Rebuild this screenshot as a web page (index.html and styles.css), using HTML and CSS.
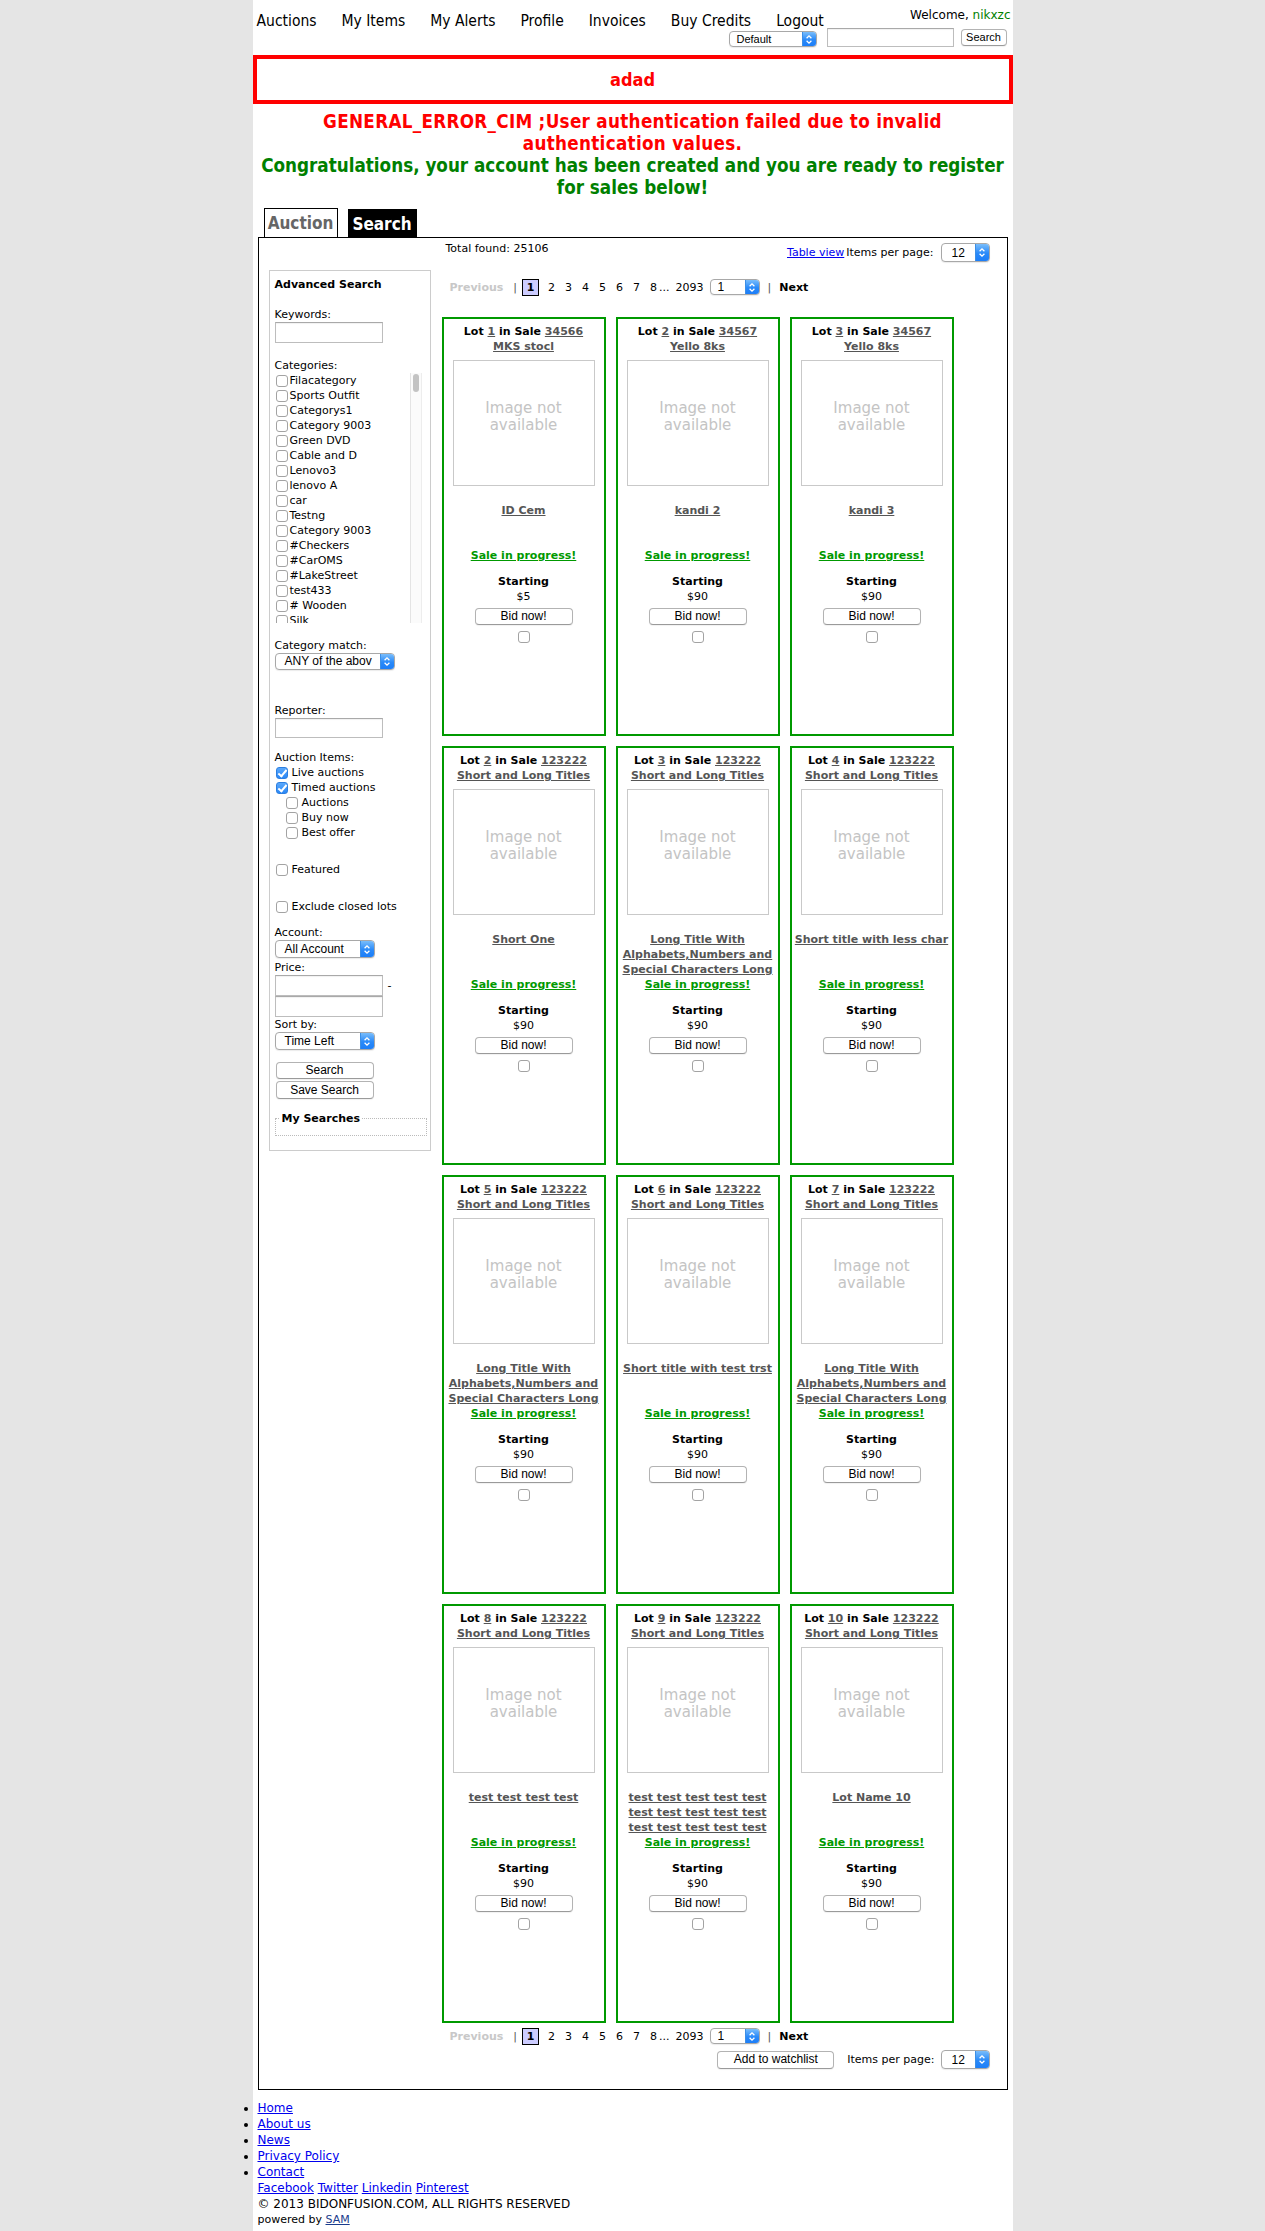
FILE: index.html
```html
<!DOCTYPE html>
<html lang="en">
<head>
<meta charset="utf-8">
<title>Search</title>
<link rel="stylesheet" href="styles.css">
</head>
<body>
<div class="page">
  <header class="header">
    <nav class="nav">
      <a href="#">Auctions</a>
      <a href="#">My Items</a>
      <a href="#">My Alerts</a>
      <a href="#">Profile</a>
      <a href="#">Invoices</a>
      <a href="#">Buy Credits</a>
      <a href="#">Logout</a>
    </nav>
    <div class="user">
      <div class="welcome">Welcome, <span class="name">nikxzc</span></div>
      <form class="quick">
        <span class="sel sel-default"><span class="sel-text">Default</span><span class="sel-arrow"><svg width="8" height="11" viewBox="0 0 8 11"><path d="M1.6 4.2 L4 1.8 L6.4 4.2 M1.6 6.8 L4 9.2 L6.4 6.8" stroke="#fff" stroke-width="1.3" fill="none"/></svg></span></span>
        <input class="txt txt-quick" type="text">
        <button class="btn btn-quick" type="button">Search</button>
      </form>
    </div>
  </header>

  <div class="alert">adad</div>
  <div class="msg msg-error">GENERAL_ERROR_CIM ;User authentication failed due to invalid<br>authentication values.</div>
  <div class="msg msg-ok">Congratulations, your account has been created and you are ready to register<br>for sales below!</div>

  <div class="tabs">
    <a class="tab tab-auction" href="#">Auction</a>
    <a class="tab tab-search" href="#">Search</a>
  </div>

  <div class="mainbox">
    <aside class="sidebar">
      <div class="side-title">Advanced Search</div>
      <div class="lbl lbl-keywords">Keywords:</div>
      <input class="txt txt-side" type="text">
      <div class="lbl lbl-cats">Categories:</div>
      <div class="catbox">
        <div class="catlist">
          <label class="chk"><input class="cb" type="checkbox"><span>Filacategory</span></label>
          <label class="chk"><input class="cb" type="checkbox"><span>Sports Outfit</span></label>
          <label class="chk"><input class="cb" type="checkbox"><span>Categorys1</span></label>
          <label class="chk"><input class="cb" type="checkbox"><span>Category 9003</span></label>
          <label class="chk"><input class="cb" type="checkbox"><span>Green DVD</span></label>
          <label class="chk"><input class="cb" type="checkbox"><span>Cable and D</span></label>
          <label class="chk"><input class="cb" type="checkbox"><span>Lenovo3</span></label>
          <label class="chk"><input class="cb" type="checkbox"><span>lenovo A</span></label>
          <label class="chk"><input class="cb" type="checkbox"><span>car</span></label>
          <label class="chk"><input class="cb" type="checkbox"><span>Testng</span></label>
          <label class="chk"><input class="cb" type="checkbox"><span>Category 9003</span></label>
          <label class="chk"><input class="cb" type="checkbox"><span>#Checkers</span></label>
          <label class="chk"><input class="cb" type="checkbox"><span>#CarOMS</span></label>
          <label class="chk"><input class="cb" type="checkbox"><span>#LakeStreet</span></label>
          <label class="chk"><input class="cb" type="checkbox"><span>test433</span></label>
          <label class="chk"><input class="cb" type="checkbox"><span># Wooden</span></label>
          <label class="chk"><input class="cb" type="checkbox"><span>Silk</span></label>
        </div>
        <div class="vscroll"><div class="vthumb"></div></div>
      </div>
      <div class="lbl lbl-match">Category match:</div>
      <span class="sel sel-match"><span class="sel-text">ANY of the abov</span><span class="sel-arrow"><svg width="8" height="11" viewBox="0 0 8 11"><path d="M1.6 4.2 L4 1.8 L6.4 4.2 M1.6 6.8 L4 9.2 L6.4 6.8" stroke="#fff" stroke-width="1.3" fill="none"/></svg></span></span>
      <div class="lbl lbl-reporter">Reporter:</div>
      <input class="txt txt-side txt-reporter" type="text">
      <div class="lbl lbl-items">Auction Items:</div>
      <label class="chk chk-wide"><input class="cb" type="checkbox" checked><span>Live auctions</span></label>
      <label class="chk chk-wide"><input class="cb" type="checkbox" checked><span>Timed auctions</span></label>
      <label class="chk chk-sub"><input class="cb" type="checkbox"><span>Auctions</span></label>
      <label class="chk chk-sub"><input class="cb" type="checkbox"><span>Buy now</span></label>
      <label class="chk chk-sub"><input class="cb" type="checkbox"><span>Best offer</span></label>
      <label class="chk chk-wide chk-gap"><input class="cb" type="checkbox"><span>Featured</span></label>
      <label class="chk chk-wide chk-gap"><input class="cb" type="checkbox"><span>Exclude closed lots</span></label>
      <div class="lbl lbl-account">Account:</div>
      <span class="sel sel-side"><span class="sel-text">All Account</span><span class="sel-arrow"><svg width="8" height="11" viewBox="0 0 8 11"><path d="M1.6 4.2 L4 1.8 L6.4 4.2 M1.6 6.8 L4 9.2 L6.4 6.8" stroke="#fff" stroke-width="1.3" fill="none"/></svg></span></span>
      <div class="lbl lbl-price">Price:</div>
      <div class="price-row"><input class="txt txt-price" type="text"><span class="dash">-</span></div>
      <input class="txt txt-price" type="text">
      <div class="lbl">Sort by:</div>
      <span class="sel sel-side"><span class="sel-text">Time Left</span><span class="sel-arrow"><svg width="8" height="11" viewBox="0 0 8 11"><path d="M1.6 4.2 L4 1.8 L6.4 4.2 M1.6 6.8 L4 9.2 L6.4 6.8" stroke="#fff" stroke-width="1.3" fill="none"/></svg></span></span>
      <button class="btn btn-side btn-search" type="button">Search</button>
      <button class="btn btn-side btn-save" type="button">Save Search</button>
      <fieldset class="searches"><legend>My Searches</legend></fieldset>
    </aside>

    <section class="content">
      <div class="topbar">
        <div class="total">Total found: 25106</div>
        <div class="view">
          <a class="link" href="#">Table view</a><span class="ipp">Items per page:</span>
          <span class="sel sel-ipp"><span class="sel-text">12</span><span class="sel-arrow"><svg width="8" height="11" viewBox="0 0 8 11"><path d="M1.6 4.2 L4 1.8 L6.4 4.2 M1.6 6.8 L4 9.2 L6.4 6.8" stroke="#fff" stroke-width="1.3" fill="none"/></svg></span></span>
        </div>
      </div>

      <div class="pager">
        <span class="pg-prev">Previous</span>
        <span class="pg-sep">|</span>
        <span class="pg-cur">1</span>
        <a class="pg-num" href="#">2</a>
        <a class="pg-num" href="#">3</a>
        <a class="pg-num" href="#">4</a>
        <a class="pg-num" href="#">5</a>
        <a class="pg-num" href="#">6</a>
        <a class="pg-num" href="#">7</a>
        <a class="pg-num" href="#">8</a>
        <span class="pg-dots">...</span>
        <a class="pg-last" href="#">2093</a>
        <span class="sel sel-page"><span class="sel-text">1</span><span class="sel-arrow"><svg width="8" height="11" viewBox="0 0 8 11"><path d="M1.6 4.2 L4 1.8 L6.4 4.2 M1.6 6.8 L4 9.2 L6.4 6.8" stroke="#fff" stroke-width="1.3" fill="none"/></svg></span></span>
        <span class="pg-sep pg-sep2">|</span>
        <a class="pg-next" href="#">Next</a>
      </div>

      <div class="grid">
        <div class="card">
          <div>Lot <a class="gl" href="#">1</a> in Sale <a class="gl" href="#">34566</a></div>
          <div><a class="gl" href="#">MKS stocl</a></div>
          <div class="thumb">Image not<br>available</div>
          <div class="ttl"><a class="gl" href="#">ID Cem</a></div>
          <div><a class="sale" href="#">Sale in progress!</a></div>
          <div class="starting">Starting</div>
          <div class="price">$5</div>
          <button class="btn bid" type="button">Bid now!</button>
          <div class="card-chk"><input class="cb" type="checkbox"></div>
        </div>
        <div class="card">
          <div>Lot <a class="gl" href="#">2</a> in Sale <a class="gl" href="#">34567</a></div>
          <div><a class="gl" href="#">Yello 8ks</a></div>
          <div class="thumb">Image not<br>available</div>
          <div class="ttl"><a class="gl" href="#">kandi 2</a></div>
          <div><a class="sale" href="#">Sale in progress!</a></div>
          <div class="starting">Starting</div>
          <div class="price">$90</div>
          <button class="btn bid" type="button">Bid now!</button>
          <div class="card-chk"><input class="cb" type="checkbox"></div>
        </div>
        <div class="card">
          <div>Lot <a class="gl" href="#">3</a> in Sale <a class="gl" href="#">34567</a></div>
          <div><a class="gl" href="#">Yello 8ks</a></div>
          <div class="thumb">Image not<br>available</div>
          <div class="ttl"><a class="gl" href="#">kandi 3</a></div>
          <div><a class="sale" href="#">Sale in progress!</a></div>
          <div class="starting">Starting</div>
          <div class="price">$90</div>
          <button class="btn bid" type="button">Bid now!</button>
          <div class="card-chk"><input class="cb" type="checkbox"></div>
        </div>

        <div class="card">
          <div>Lot <a class="gl" href="#">2</a> in Sale <a class="gl" href="#">123222</a></div>
          <div><a class="gl" href="#">Short and Long Titles</a></div>
          <div class="thumb">Image not<br>available</div>
          <div class="ttl"><a class="gl" href="#">Short One</a></div>
          <div><a class="sale" href="#">Sale in progress!</a></div>
          <div class="starting">Starting</div>
          <div class="price">$90</div>
          <button class="btn bid" type="button">Bid now!</button>
          <div class="card-chk"><input class="cb" type="checkbox"></div>
        </div>
        <div class="card">
          <div>Lot <a class="gl" href="#">3</a> in Sale <a class="gl" href="#">123222</a></div>
          <div><a class="gl" href="#">Short and Long Titles</a></div>
          <div class="thumb">Image not<br>available</div>
          <div class="ttl"><a class="gl" href="#">Long Title With<br>Alphabets,Numbers and<br>Special Characters Long</a></div>
          <div><a class="sale" href="#">Sale in progress!</a></div>
          <div class="starting">Starting</div>
          <div class="price">$90</div>
          <button class="btn bid" type="button">Bid now!</button>
          <div class="card-chk"><input class="cb" type="checkbox"></div>
        </div>
        <div class="card">
          <div>Lot <a class="gl" href="#">4</a> in Sale <a class="gl" href="#">123222</a></div>
          <div><a class="gl" href="#">Short and Long Titles</a></div>
          <div class="thumb">Image not<br>available</div>
          <div class="ttl"><a class="gl" href="#">Short title with less char</a></div>
          <div><a class="sale" href="#">Sale in progress!</a></div>
          <div class="starting">Starting</div>
          <div class="price">$90</div>
          <button class="btn bid" type="button">Bid now!</button>
          <div class="card-chk"><input class="cb" type="checkbox"></div>
        </div>

        <div class="card">
          <div>Lot <a class="gl" href="#">5</a> in Sale <a class="gl" href="#">123222</a></div>
          <div><a class="gl" href="#">Short and Long Titles</a></div>
          <div class="thumb">Image not<br>available</div>
          <div class="ttl"><a class="gl" href="#">Long Title With<br>Alphabets,Numbers and<br>Special Characters Long</a></div>
          <div><a class="sale" href="#">Sale in progress!</a></div>
          <div class="starting">Starting</div>
          <div class="price">$90</div>
          <button class="btn bid" type="button">Bid now!</button>
          <div class="card-chk"><input class="cb" type="checkbox"></div>
        </div>
        <div class="card">
          <div>Lot <a class="gl" href="#">6</a> in Sale <a class="gl" href="#">123222</a></div>
          <div><a class="gl" href="#">Short and Long Titles</a></div>
          <div class="thumb">Image not<br>available</div>
          <div class="ttl"><a class="gl" href="#">Short title with test trst</a></div>
          <div><a class="sale" href="#">Sale in progress!</a></div>
          <div class="starting">Starting</div>
          <div class="price">$90</div>
          <button class="btn bid" type="button">Bid now!</button>
          <div class="card-chk"><input class="cb" type="checkbox"></div>
        </div>
        <div class="card">
          <div>Lot <a class="gl" href="#">7</a> in Sale <a class="gl" href="#">123222</a></div>
          <div><a class="gl" href="#">Short and Long Titles</a></div>
          <div class="thumb">Image not<br>available</div>
          <div class="ttl"><a class="gl" href="#">Long Title With<br>Alphabets,Numbers and<br>Special Characters Long</a></div>
          <div><a class="sale" href="#">Sale in progress!</a></div>
          <div class="starting">Starting</div>
          <div class="price">$90</div>
          <button class="btn bid" type="button">Bid now!</button>
          <div class="card-chk"><input class="cb" type="checkbox"></div>
        </div>

        <div class="card">
          <div>Lot <a class="gl" href="#">8</a> in Sale <a class="gl" href="#">123222</a></div>
          <div><a class="gl" href="#">Short and Long Titles</a></div>
          <div class="thumb">Image not<br>available</div>
          <div class="ttl"><a class="gl" href="#">test test test test</a></div>
          <div><a class="sale" href="#">Sale in progress!</a></div>
          <div class="starting">Starting</div>
          <div class="price">$90</div>
          <button class="btn bid" type="button">Bid now!</button>
          <div class="card-chk"><input class="cb" type="checkbox"></div>
        </div>
        <div class="card">
          <div>Lot <a class="gl" href="#">9</a> in Sale <a class="gl" href="#">123222</a></div>
          <div><a class="gl" href="#">Short and Long Titles</a></div>
          <div class="thumb">Image not<br>available</div>
          <div class="ttl"><a class="gl" href="#">test test test test test<br>test test test test test<br>test test test test test</a></div>
          <div><a class="sale" href="#">Sale in progress!</a></div>
          <div class="starting">Starting</div>
          <div class="price">$90</div>
          <button class="btn bid" type="button">Bid now!</button>
          <div class="card-chk"><input class="cb" type="checkbox"></div>
        </div>
        <div class="card">
          <div>Lot <a class="gl" href="#">10</a> in Sale <a class="gl" href="#">123222</a></div>
          <div><a class="gl" href="#">Short and Long Titles</a></div>
          <div class="thumb">Image not<br>available</div>
          <div class="ttl"><a class="gl" href="#">Lot Name 10</a></div>
          <div><a class="sale" href="#">Sale in progress!</a></div>
          <div class="starting">Starting</div>
          <div class="price">$90</div>
          <button class="btn bid" type="button">Bid now!</button>
          <div class="card-chk"><input class="cb" type="checkbox"></div>
        </div>
      </div>

      <div class="pager pager-bottom">
        <span class="pg-prev">Previous</span>
        <span class="pg-sep">|</span>
        <span class="pg-cur">1</span>
        <a class="pg-num" href="#">2</a>
        <a class="pg-num" href="#">3</a>
        <a class="pg-num" href="#">4</a>
        <a class="pg-num" href="#">5</a>
        <a class="pg-num" href="#">6</a>
        <a class="pg-num" href="#">7</a>
        <a class="pg-num" href="#">8</a>
        <span class="pg-dots">...</span>
        <a class="pg-last" href="#">2093</a>
        <span class="sel sel-page"><span class="sel-text">1</span><span class="sel-arrow"><svg width="8" height="11" viewBox="0 0 8 11"><path d="M1.6 4.2 L4 1.8 L6.4 4.2 M1.6 6.8 L4 9.2 L6.4 6.8" stroke="#fff" stroke-width="1.3" fill="none"/></svg></span></span>
        <span class="pg-sep pg-sep2">|</span>
        <a class="pg-next" href="#">Next</a>
      </div>

      <div class="actions">
        <button class="btn btn-watch" type="button">Add to watchlist</button>
        <span class="ipp ipp-bottom">Items per page:</span>
        <span class="sel sel-ipp"><span class="sel-text">12</span><span class="sel-arrow"><svg width="8" height="11" viewBox="0 0 8 11"><path d="M1.6 4.2 L4 1.8 L6.4 4.2 M1.6 6.8 L4 9.2 L6.4 6.8" stroke="#fff" stroke-width="1.3" fill="none"/></svg></span></span>
      </div>
    </section>
  </div>

  <footer class="footer">
    <ul class="foot-links">
      <li><a href="#">Home</a></li>
      <li><a href="#">About us</a></li>
      <li><a href="#">News</a></li>
      <li><a href="#">Privacy Policy</a></li>
      <li><a href="#">Contact</a></li>
    </ul>
    <div class="social"><a href="#">Facebook</a> <a href="#">Twitter</a> <a href="#">Linkedin</a> <a href="#">Pinterest</a></div>
    <div class="copy">&copy; 2013 BIDONFUSION.COM, ALL RIGHTS RESERVED</div>
    <div class="powered">powered by <a href="#">SAM</a></div>
  </footer>
</div>
</body>
</html>
```

FILE: styles.css
```css
* { box-sizing: border-box; }

body {
  margin: 0;
  background: #e5e5e5;
  font-family: "DejaVu Sans", Verdana, sans-serif;
  font-size: 11px;
  color: #000;
}

.page {
  width: 760px;
  margin: 0 auto;
  background: #fff;
  min-height: 2231px;
}

/* header: nav and user block share one grid cell */
.header {
  display: grid;
  height: 55px;
}
.nav,
.user { grid-area: 1 / 1; }
.nav {
  justify-self: start;
  display: flex;
  gap: 25px;
  padding: 11px 0 0 4px;
  font-family: "DejaVu Sans Condensed", "Liberation Sans", sans-serif;
  font-size: 15.5px;
  line-height: 20px;
  white-space: nowrap;
  height: 31px;
}
.nav a { color: #000; text-decoration: none; }

.user {
  justify-self: end;
  display: flex;
  flex-direction: column;
  align-items: flex-end;
  padding: 8px 2px 0 0;
  white-space: nowrap;
}
.welcome { font-size: 12px; line-height: 14px; }
.welcome .name { color: #008000; }
.quick {
  display: flex;
  align-items: center;
  margin: 6px 4px 0 0;
  height: 19px;
}

/* mac-like select */
.sel {
  display: inline-flex;
  align-items: stretch;
  border: 1px solid #a8a8a8;
  border-radius: 4px;
  background: #fff;
  overflow: hidden;
  font-family: "Liberation Sans", Arial, sans-serif;
  font-size: 12px;
  color: #000;
  box-shadow: 0 1px 1px rgba(0,0,0,0.08);
  flex: none;
}
.sel-text {
  flex: 1;
  display: flex;
  align-items: center;
  padding-left: 9px;
  white-space: nowrap;
  overflow: hidden;
}
.sel-arrow {
  width: 14px;
  display: flex;
  align-items: center;
  justify-content: center;
  background: linear-gradient(#79bdfb, #2a8af9 55%, #1c7ef8);
  border-left: 1px solid #3c8fe6;
}
.sel-default { width: 88px; height: 16px; font-size: 11px; margin-top: 3px; }
.sel-default .sel-text { padding-left: 7px; }
.sel-match { width: 120px; height: 17px; }
.sel-side { width: 100px; height: 18px; }
.sel-ipp { width: 49px; height: 19px; }
.sel-ipp .sel-text { padding-left: 10px; }
.sel-page { width: 50px; height: 16px; margin-left: 6px; }
.sel-page .sel-text { padding-left: 7px; }

.txt {
  display: block;
  border: 1px solid #bdbdbd;
  border-top-color: #a9a9a9;
  background: #fff;
  box-shadow: inset 0 1px 1px rgba(0,0,0,0.06);
  padding: 0;
  margin: 0;
}
.txt-quick { width: 127px; height: 19px; margin-left: 10px; }

.btn {
  display: block;
  background: #fff;
  border: 1px solid #b3b3b3;
  border-bottom-color: #9a9a9a;
  border-radius: 4px;
  font-family: "Liberation Sans", Arial, sans-serif;
  font-size: 12px;
  color: #000;
  padding: 0;
  line-height: 15px;
  box-shadow: 0 1px 1px rgba(0,0,0,0.06);
}
.btn-quick { width: 46px; height: 17px; font-size: 11px; margin-left: 7px; }

/* messages */
.alert {
  height: 49px;
  border: 4px solid #ff0000;
  color: #ff0000;
  font-family: "DejaVu Sans Condensed", "Liberation Sans", sans-serif;
  font-weight: bold;
  font-size: 18px;
  display: flex;
  align-items: center;
  justify-content: center;
}
.msg {
  text-align: center;
  font-family: "DejaVu Sans Condensed", "Liberation Sans", sans-serif;
  font-weight: bold;
  font-size: 18.7px;
  line-height: 22px;
  white-space: nowrap;
}
.msg-error { color: #ff0000; margin-top: 7px; letter-spacing: 0.3px; }
.msg-ok { color: #008000; }

/* tabs */
.tabs {
  display: flex;
  align-items: flex-end;
  gap: 10px;
  height: 29px;
  margin-top: 9px;
  padding-left: 11px;
}
.tab {
  display: block;
  font-family: "DejaVu Sans Condensed", "Liberation Sans", sans-serif;
  font-weight: bold;
  font-size: 17px;
  text-decoration: none;
  text-align: center;
}
.tab-auction {
  width: 74px;
  height: 29px;
  line-height: 29px;
  border: 1px solid #000;
  border-bottom: none;
  color: #666;
  background: #fff;
}
.tab-search {
  width: 69px;
  height: 28px;
  line-height: 30px;
  background: #000;
  color: #fff;
}

/* main box */
.mainbox {
  margin: 0 5px;
  border: 1px solid #000;
  display: flex;
  align-items: flex-start;
  padding: 0 0 20px 10px;
}

.sidebar {
  width: 162px;
  margin-top: 32px;
  border: 1px solid #ccc;
  padding: 6px 0 14px 5px;
  line-height: 15px;
}
.side-title { font-weight: bold; }
.lbl { display: block; }
.lbl-keywords { margin-top: 15px; }
.txt-side { width: 108px; height: 21px; }
.lbl-cats { margin-top: 16px; line-height: 14px; }

.catbox {
  display: flex;
  width: 147px;
  height: 250px;
}
.catlist {
  flex: 1;
  overflow: hidden;
}
.vscroll {
  width: 12px;
  border-left: 1px solid #e4e4e4;
  border-right: 1px solid #ededed;
  background: #fbfbfb;
  padding: 1px 2px 0 2px;
}
.vthumb {
  height: 18px;
  border-radius: 4px;
  background: #c3c3c3;
}

.chk {
  display: flex;
  align-items: center;
  height: 15px;
  white-space: nowrap;
}
.cb {
  -webkit-appearance: none;
  appearance: none;
  width: 12px;
  height: 12px;
  margin: 0 2px 0 1px;
  border: 1px solid #a3a3a3;
  border-radius: 3px;
  background: #fff;
  flex: none;
  position: relative;
}
.cb:checked {
  background: linear-gradient(#5aa8fb, #2a88f7);
  border-color: #2d7fe0;
}
.cb:checked::after {
  content: "";
  position: absolute;
  left: 3px;
  top: 0px;
  width: 3px;
  height: 7px;
  border: solid #fff;
  border-width: 0 2px 2px 0;
  transform: rotate(40deg);
}
.chk-wide .cb { margin-right: 4px; }
.chk-sub .cb { margin-left: 11px; margin-right: 4px; }
.chk-gap { margin-top: 22px; }

.lbl-match { margin-top: 15px; }
.sel-match { display: flex; }
.lbl-reporter { margin-top: 33px; }
.txt-reporter { height: 20px; }
.lbl-items { margin-top: 12px; }
.lbl-account { margin-top: 11px; }
.sel-side { display: flex; }
.lbl-price { margin-top: 2px; }
.price-row { display: flex; align-items: center; }
.txt-price { width: 108px; height: 21px; }
.dash { margin-left: 5px; font-size: 11px; }
.btn-side { width: 98px; height: 18px; margin-left: 1px; }
.btn-search { margin-top: 12px; height: 17px; }
.btn-save { margin-top: 2px; }
.searches {
  margin: 13px 0 0 0;
  padding: 0;
  width: 152px;
  height: 24px;
  border: 1px dotted #bbb;
}
.searches legend {
  font-weight: bold;
  padding: 0 2px;
  margin-left: 4px;
  line-height: 13px;
}

/* content */
.content {
  width: 548px;
  margin-left: 11px;
}
.topbar {
  display: flex;
  justify-content: space-between;
  align-items: flex-start;
  height: 32px;
}
.total { margin: 4px 0 0 4px; line-height: 14px; }
.view {
  display: flex;
  align-items: center;
  height: 19px;
  margin-top: 5px;
}
.link { color: #0000ee; text-decoration: underline; }
.ipp { margin-left: 2px; margin-right: 7px; }

.pager {
  display: flex;
  align-items: center;
  height: 18px;
  margin-top: 8px;
  padding-left: 8px;
}
.pager a { color: #000; text-decoration: none; }
.pg-prev { font-weight: bold; color: #c8c8c8; }
.pg-sep { color: #555; margin-left: 10px; }
.pg-cur {
  margin-left: 5px;
  width: 17px;
  height: 17px;
  border: 1px solid #000;
  background: #ccccff;
  font-weight: bold;
  display: flex;
  align-items: center;
  justify-content: center;
}
.pg-num { margin-left: 10px; }
.pg-cur + .pg-num { margin-left: 9px; }
.pg-dots { margin-left: 2px; }
.pg-last { margin-left: 6px; }
.pg-sep2 { margin-left: 8px; }
.pager .pg-next { margin-left: 8px; font-weight: bold; }

.grid {
  display: grid;
  grid-template-columns: repeat(3, 164px);
  gap: 10px;
  margin-top: 21px;
}
.card {
  height: 419px;
  border: 2px solid #009900;
  padding: 5px 1px 0;
  text-align: center;
  font-weight: bold;
  line-height: 15px;
  white-space: nowrap;
}
.gl { color: #555; text-decoration: underline; }
.thumb {
  width: 142px;
  height: 126px;
  margin: 6px auto 0;
  border: 1px solid #c9c9c9;
  padding-top: 39px;
  color: #c4c4c4;
  font-weight: normal;
  font-size: 15px;
  line-height: 17px;
}
.ttl {
  height: 45px;
  margin-top: 17px;
  overflow: hidden;
}
.sale { color: #009900; text-decoration: underline; }
.starting { margin-top: 11px; }
.price { font-weight: normal; }
.bid {
  width: 98px;
  height: 17px;
  margin: 4px auto 0;
  font-weight: normal;
}
.card-chk { margin-top: 6px; height: 13px; display: flex; justify-content: center; }
.card-chk .cb { margin: 0; }

.pager-bottom { margin-top: 4px; }
.actions {
  display: flex;
  align-items: center;
  justify-content: flex-end;
  height: 19px;
  margin-top: 5px;
}
.btn-watch { width: 117px; height: 18px; margin-right: 13px; }
.ipp-bottom { margin: 0 6px 0 0; }

/* footer */
.footer {
  padding: 10px 0 0 5px;
  font-size: 12px;
  line-height: 16px;
}
.footer a { color: #0000ee; text-decoration: underline; }
.foot-links { margin: 0; padding: 0; list-style: disc outside; }
.powered { font-size: 11px; line-height: 15px; }
.powered a { color: #1a3c8c; }
```
